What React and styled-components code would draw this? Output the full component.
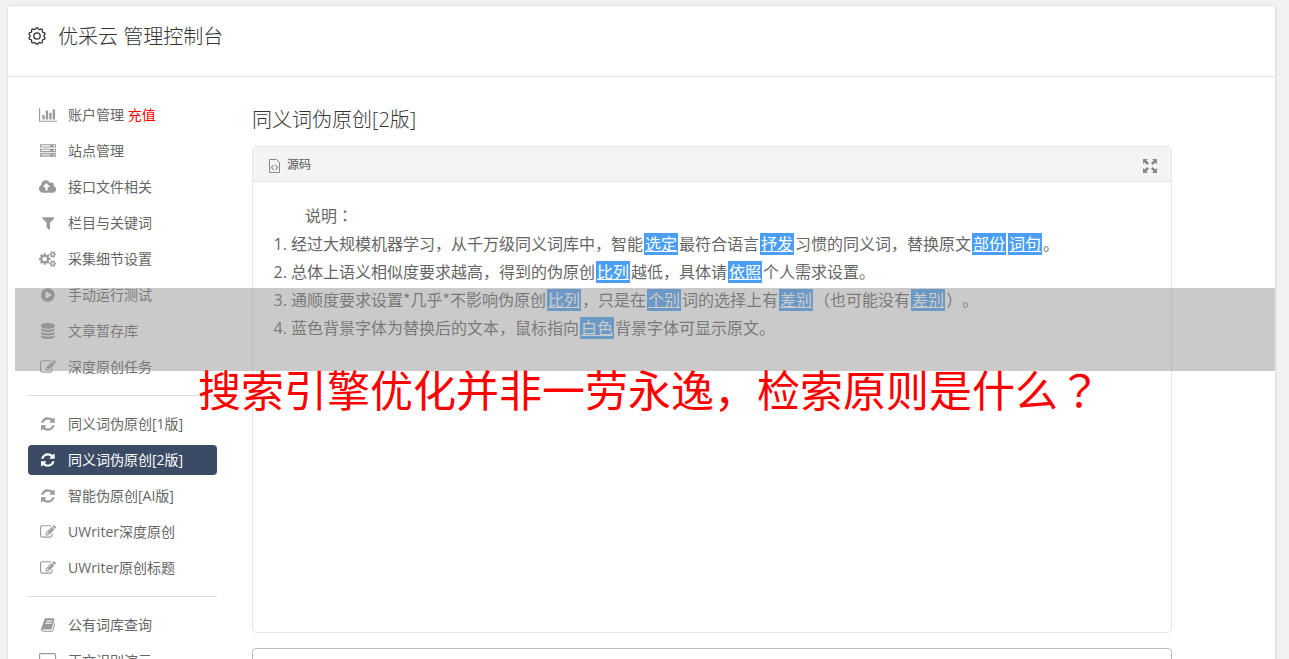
import React from 'react';
import styled, { createGlobalStyle } from 'styled-components';

const GlobalStyle = createGlobalStyle`
  *,
  *::before,
  *::after {
    box-sizing: border-box;
  }

  body {
    margin: 0;
    background-color: #f1f1f1;
    color: #666;
    font-family: 'Open Sans', 'Noto Sans CJK SC', sans-serif;
    font-size: 14px;
    text-spacing-trim: space-all;
  }
`;

const Page = styled.div`
  position: relative;
  height: 100vh;
  padding: 5px 12px 0 7px;
  overflow: hidden;
`;

const Card = styled.div`
  min-height: 100%;
  border: 1px solid #e5e5e5;
  border-right-width: 2px;
  border-radius: 4px;
  background-color: white;
`;

const Header = styled.header`
  display: flex;
  align-items: flex-start;
  gap: 10px;
  height: 71px;
  padding: 17px 20px 0;
  border-bottom: 1px solid #e5e5e5;
  color: #333;

  svg {
    margin-top: 3px;
  }
`;

const Title = styled.h1`
  margin: 0;
  font-size: 20px;
  font-weight: 300;
  line-height: 28px;
`;

const Columns = styled.div`
  display: flex;
  align-items: flex-start;
  gap: 35px;
  padding: 23px 103px 0 20px;
`;

const Sidebar = styled.nav`
  flex: 0 0 189px;
`;

const Menu = styled.ul`
  display: flex;
  flex-direction: column;
  gap: 6px;
  margin: 0;
  padding: 0;
  list-style: none;

  & + & {
    margin-top: 13px;
    padding-top: 13px;
    border-top: 1px solid #ddd;
  }
`;

const MenuLink = styled.a`
  display: flex;
  align-items: center;
  gap: 10px;
  height: 30px;
  padding: 0 10px;
  border-radius: 4px;
  background-color: ${props => (props.$active ? '#3b4b66' : 'transparent')};
  color: ${props => (props.$active ? 'white' : '#666')};
  text-decoration: none;
  white-space: nowrap;

  svg {
    color: ${props => (props.$active ? 'white' : '#999')};
  }

  em {
    color: red;
    font-style: normal;
  }
`;

const MenuText = styled.span`
  padding-bottom: 2px;
`;

const IconBox = styled.span`
  display: flex;
  flex: 0 0 20px;
  justify-content: center;

  svg {
    flex: none;
  }
`;

const Content = styled.main`
  flex: 1;
  min-width: 0;
  padding-top: 6px;
`;

const SectionTitle = styled.h2`
  margin: 0 0 12px;
  color: #333;
  font-size: 20px;
  font-weight: 300;
  line-height: 28px;
`;

const Editor = styled.section`
  border: 1px solid #e5e5e5;
  border-radius: 4px;
`;

const Toolbar = styled.div`
  display: flex;
  align-items: center;
  justify-content: space-between;
  height: 35px;
  padding: 0 14px;
  border-bottom: 1px solid #e5e5e5;
  border-radius: 3px 3px 0 0;
  background-color: #f4f4f4;
`;

const ToolButton = styled.button`
  display: flex;
  align-items: center;
  gap: 6px;
  padding: 0;
  border: 0;
  background: none;
  color: #555;
  font-family: inherit;
  font-size: 12px;

  svg {
    margin-top: 4px;
    color: #888;
  }
`;

const EditorBody = styled.div`
  min-height: 450px;
  padding: 20px;
  font-size: 16px;
  line-height: 28px;

  p {
    margin: 0;
    text-indent: 2em;
  }
`;

const Notes = styled.ol`
  margin: 0;
  padding-left: 18px;
`;

const Word = styled.span`
  margin: 0 1px;
  padding: 0 1px;
  background-color: #4a9ff5;
  color: white;
  text-decoration: underline;
`;

// punctuation that sits in the middle of its cell
const Mark = styled.span`
  font-family: 'Noto Sans CJK TC', sans-serif;
  line-height: 1;
`;

const Result = styled.textarea`
  display: block;
  width: 100%;
  height: 120px;
  margin-top: 15px;
  border: 1px solid #bbb;
  border-radius: 4px;
  resize: none;
`;

const Band = styled.div`
  position: absolute;
  top: 288px;
  right: 14px;
  left: 15px;
  height: 83px;
  background-color: rgba(145, 145, 145, 0.48);
`;

const Caption = styled.div`
  position: absolute;
  top: 361px;
  right: 0;
  left: 10px;
  color: red;
  font-size: 43px;
  line-height: 60px;
  text-align: center;
  white-space: nowrap;
`;

const smallCog =
  'v140q0 16-149 31-12 27-30 52 51 113 51 138 0 4-4 7-122 71-124 71-8 0-46-47t-52-68q-20 2-30 2t-30-2q-14 21-52 68t-46 47q-2 0-124-71-4-3-4-7 0-25 51-138-18-25-30-52-149-15-149-31v-140q0-16 149-31 13-29 30-52-51-113-51-138 0-4 4-7 4-2 35-20t59-34 30-16q8 0 46 46.5t52 67.5q20-2 30-2t30 2q51-71 92-112l6-2q4 0 124 70 4 3 4 7 0 25-51 138 17 23 30 52 149 15 149 31z';

const dot = 'q0-40-28-68t-68-28-68 28-28 68 28 68 68 28 68-28 28-68z';

const disk =
  'q237 0 443-43t325-127v170q0 69-103 128t-280 93.5-385 34.5-385-34.5-280-93.5-103-128v-170q119 84 325 127t443 43z';

// [width of the 1792-high glyph, outline]
const glyphs = {
  chart: [
    2048,
    'M640 896v512h-256v-512h256zM1024 384v1024h-256v-1024h256zM2048 1536v128h-2048v-1536h128v1408h1920zM1408 640v768h-256v-768h256zM1792 256v1152h-256v-1152h256z',
  ],
  server: [
    1792,
    `M128 1408h1024v-128h-1024v128zM128 896h1024v-128h-1024v128zM1696 1344${dot}M128 384h1024v-128h-1024v128zM1696 832${dot}M1696 320${dot}M1792 1152v384h-1792v-384h1792zM1792 640v384h-1792v-384h1792zM1792 128v384h-1792v-384h1792z`,
  ],
  cloud: [
    1920,
    'M1216 864q0-14-9-23l-352-352q-9-9-23-9t-23 9l-351 351q-10 12-10 24 0 14 9 23t23 9h224v352q0 13 9.5 22.5t22.5 9.5h192q13 0 22.5-9.5t9.5-22.5v-352h224q13 0 22.5-9.5t9.5-22.5zM1920 1152q0 159-112.5 271.5t-271.5 112.5h-1088q-185 0-316.5-131.5t-131.5-316.5q0-130 70-240t188-165q-2-30-2-43 0-212 150-362t362-150q156 0 285.5 87t188.5 231q71-62 166-62 106 0 181 75t75 181q0 76-41 138 130 31 213.5 135.5t83.5 238.5z',
  ],
  filter: [
    1408,
    'M1403 295q17 41-14 70l-493 493v742q0 42-39 59-13 5-25 5-27 0-45-19l-256-256q-19-19-19-45v-486l-493-493q-31-29-14-70 17-39 59-39h1280q42 0 59 39z',
  ],
  cogs: [
    1920,
    `M896 896q0-106-75-181t-181-75-181 75-75 181 75 181 181 75 181-75 75-181zM1664 1408q0-52-38-90t-90-38-90 38-38 90q0 53 37.5 90.5t90.5 37.5 90.5-37.5 37.5-90.5zM1664 384q0-52-38-90t-90-38-90 38-38 90q0 53 37.5 90.5t90.5 37.5 90.5-37.5 37.5-90.5zM1280 805v185q0 10-7 19.5t-16 10.5l-155 24q-11 35-32 76 34 48 90 115 7 11 7 20 0 12-7 19-23 30-82.5 89.5t-78.5 59.5q-11 0-21-7l-115-90q-37 19-77 31-11 108-23 155-7 24-30 24h-186q-11 0-20-7.5t-10-17.5l-23-153q-34-10-75-31l-118 89q-7 7-20 7-11 0-21-8-144-133-144-160 0-9 7-19 10-14 41-53t47-61q-23-44-35-82l-152-24q-10-1-17-9.5t-7-19.5v-185q0-10 7-19.5t16-10.5l155-24q11-35 32-76-34-48-90-115-7-11-7-20 0-12 7-20 22-30 82-89t79-59q11 0 21 7l115 90q34-18 77-32 11-108 23-154 7-24 30-24h186q11 0 20 7.5t10 17.5l23 153q34 10 75 31l118-89q8-7 20-7 11 0 21 8 144 133 144 160 0 8-7 19-12 16-42 54t-45 60q23 48 34 82l152 23q10 2 17 10.5t7 19.5zM1920 1338${smallCog}M1920 314${smallCog}`,
  ],
  play: [
    1536,
    'M1184 896q0-37-32-55l-544-320q-31-19-64-1-32 19-32 56v640q0 37 32 56 16 8 32 8 17 0 32-9l544-320q32-18 32-55zM1536 896q0 209-103 385.5t-279.5 279.5-385.5 103-385.5-103-279.5-279.5-103-385.5 103-385.5 279.5-279.5 385.5-103 385.5 103 279.5 279.5 103 385.5z',
  ],
  database: [
    1536,
    `M768 768${disk}M768 1536${disk}M768 1152${disk}M768 0q208 0 385 34.5t280 93.5 103 128v128q0 69-103 128t-280 93.5-385 34.5-385-34.5-280-93.5-103-128v-128q0-69 103-128t280-93.5 385-34.5z`,
  ],
  edit: [
    1792,
    'M888 1184l116-116-152-152-116 116v56h96v96h56zM1328 464q-16-16-33 1l-350 350q-17 17-1 33t33-1l350-350q17-17 1-33zM1408 1058v190q0 119-84.5 203.5t-203.5 84.5h-832q-119 0-203.5-84.5t-84.5-203.5v-832q0-119 84.5-203.5t203.5-84.5h832q63 0 117 25 15 7 18 23 3 17-9 29l-49 49q-14 14-32 8-23-6-45-6h-832q-66 0-113 47t-47 113v832q0 66 47 113t113 47h832q66 0 113-47t47-113v-126q0-13 9-22l64-64q15-15 35-7t20 29zM1312 320l288 288-672 672h-288v-288zM1756 452l-92 92-288-288 92-92q28-28 68-28t68 28l152 152q28 28 28 68t-28 68z',
  ],
  refresh: [
    1536,
    'M1511 1056q0 5-1 7-64 268-268 434.5t-478 166.5q-146 0-282.5-55t-243.5-157l-129 129q-19 19-45 19t-45-19-19-45v-448q0-26 19-45t45-19h448q26 0 45 19t19 45-19 45l-137 137q71 66 161 102t187 36q134 0 250-65t186-179q11-17 53-117 8-23 30-23h192q13 0 22.5 9.5t9.5 22.5zM1536 256v448q0 26-19 45t-45 19h-448q-26 0-45-19t-19-45 19-45l138-138q-148-137-349-137-134 0-250 65t-186 179q-11 17-53 117-8 23-30 23h-199q-13 0-22.5-9.5t-9.5-22.5v-7q65-268 270-434.5t480-166.5q146 0 284 55.5t245 156.5l130-129q19-19 45-19t45 19 19 45z',
  ],
  book: [
    1664,
    'M1639 478q40 57 18 129l-275 906q-19 64-76.5 107.5t-122.5 43.5h-923q-77 0-148.5-53.5t-99.5-131.5q-24-67-2-127 0-4 3-27t4-37q1-8-3-21.5t-3-19.5q2-11 8-21t16.5-23.5 16.5-23.5q23-38 45-91.5t30-91.5q3-10 .5-30t-.5-28q3-11 17-28t17-23q21-36 42-92t25-90q1-9-2.5-32t.5-28q4-13 22-30.5t22-22.5q19-26 42.5-84.5t27.5-96.5q1-8-3-25.5t-2-26.5q2-8 9-18t18-23 17-21q8-12 16.5-30.5t15-35 16-36 19.5-32 26.5-23.5 36-11.5 47.5 5.5l-1 3q38-9 51-9h761q74 0 114 56t18 130l-274 906q-36 119-71.5 153.5t-128.5 34.5h-869q-27 0-38 15-11 16-1 43 24 70 144 70h923q29 0 56-15.5t35-41.5l300-987q7-22 5-57 38 15 59 43zM575 480q-4 13 2 22.5t20 9.5h608q13 0 25.5-9.5t16.5-22.5l21-64q4-13-2-22.5t-20-9.5h-608q-13 0-25.5 9.5t-16.5 22.5zM492 736q-4 13 2 22.5t20 9.5h608q13 0 25.5-9.5t16.5-22.5l21-64q4-13-2-22.5t-20-9.5h-608q-13 0-25.5 9.5t-16.5 22.5z',
  ],
  desktop: [
    1920,
    'M1792 992v-832q0-13-9.5-22.5t-22.5-9.5h-1600q-13 0-22.5 9.5t-9.5 22.5v832q0 13 9.5 22.5t22.5 9.5h1600q13 0 22.5-9.5t9.5-22.5zM1920 160v1088q0 66-47 113t-113 47h-544q0 37 16 77.5t32 71 16 43.5q0 26-19 45t-45 19h-512q-26 0-45-19t-19-45q0-14 16-44t32-70 16-78h-544q-66 0-113-47t-47-113v-1088q0-66 47-113t113-47h1600q66 0 113 47t47 113z',
  ],
};

function Glyph({ name }) {
  const [width, d] = glyphs[name];
  return (
    <svg
      width={(width * 16) / 1792}
      height="16"
      viewBox={`0 0 ${width} 1792`}
      fill="currentColor"
      aria-hidden="true"
    >
      <path fillRule="evenodd" d={d} />
    </svg>
  );
}

// rim of the header gear: ten rounded teeth
const rim = Array.from({ length: 80 }, (_, i) => {
  const a = (i / 80) * Math.PI * 2;
  const r = 7.6 + 0.7 * Math.tanh(2 * Math.cos(a * 10));
  return `${(9 + r * Math.sin(a)).toFixed(2)},${(9 - r * Math.cos(a)).toFixed(2)}`;
}).join(' ');

const GearIcon = () => (
  <svg width="20" height="20" viewBox="0 -1 20 20" fill="none" stroke="currentColor" strokeWidth="1.3" aria-hidden="true">
    <polygon points={rim} strokeLinejoin="round" />
    <circle cx="9" cy="9" r="3.2" />
  </svg>
);

const SourceIcon = () => (
  <svg width="14" height="16" viewBox="0 0 14 16" fill="none" stroke="currentColor" aria-hidden="true">
    <path d="M2.500 1.500h7l3 3v10h-10z" />
    <path d="M6.500 7l-2 2.500 2 2.500M8.500 7l2 2.500-2 2.500" strokeWidth="1.2" />
  </svg>
);

const ExpandIcon = () => (
  <svg width="14" height="14" viewBox="0 0 14 14" fill="currentColor" aria-hidden="true">
    <path d="M0 0h5L3.400 1.600 6 4.200 4.200 6 1.600 3.400 0 5zM14 0v5l-1.600-1.600L9.800 6 8 4.200l2.600-2.600L9 0zM0 14V9l1.600 1.600L4.200 8 6 9.800l-2.600 2.600L5 14zM14 14H9l1.600-1.600L8 9.800 9.800 8l2.600 2.600L14 9z" />
  </svg>
);

const menus = [
  [
    { icon: 'chart', label: '账户管理', extra: '充值' },
    { icon: 'server', label: '站点管理' },
    { icon: 'cloud', label: '接口文件相关' },
    { icon: 'filter', label: '栏目与关键词' },
    { icon: 'cogs', label: '采集细节设置' },
    { icon: 'play', label: '手动运行测试' },
    { icon: 'database', label: '文章暂存库' },
    { icon: 'edit', label: '深度原创任务' },
  ],
  [
    { icon: 'refresh', label: '同义词伪原创[1版]' },
    { icon: 'refresh', label: '同义词伪原创[2版]', active: true },
    { icon: 'refresh', label: '智能伪原创[AI版]' },
    { icon: 'edit', label: 'UWriter深度原创' },
    { icon: 'edit', label: 'UWriter原创标题' },
  ],
  [
    { icon: 'book', label: '公有词库查询' },
    { icon: 'desktop', label: '正文识别演示' },
  ],
];

export default () => (
  <Page>
    <GlobalStyle />
    <Card>
      <Header>
        <GearIcon />
        <Title>优采云 管理控制台</Title>
      </Header>
      <Columns>
        <Sidebar>
          {menus.map(items => (
            <Menu key={items[0].label}>
              {items.map(({ icon, label, extra, active }) => (
                <li key={label}>
                  <MenuLink href="#" $active={active}>
                    <IconBox>
                      <Glyph name={icon} />
                    </IconBox>
                    <MenuText>
                      {label} {extra && <em>{extra}</em>}
                    </MenuText>
                  </MenuLink>
                </li>
              ))}
            </Menu>
          ))}
        </Sidebar>
        <Content>
          <SectionTitle>同义词伪原创[2版]</SectionTitle>
          <Editor>
            <Toolbar>
              <ToolButton type="button">
                <SourceIcon />
                源码
              </ToolButton>
              <ToolButton type="button" aria-label="全屏">
                <ExpandIcon />
              </ToolButton>
            </Toolbar>
            <EditorBody>
              <p>说明<Mark>：</Mark></p>
              <Notes>
                <li>
                  经过大规模机器学习，从千万级同义词库中，智能<Word>选定</Word>最符合语言<Word>抒发</Word>习惯的同义词，替换原文<Word>部份</Word><Word>词句</Word>。
                </li>
                <li>
                  总体上语义相似度要求越高，得到的伪原创<Word>比列</Word>越低，具体请<Word>依照</Word>个人需求设置。
                </li>
                <li>
                  通顺度要求设置<Mark>*</Mark>几乎<Mark>*</Mark>不影响伪原创<Word>比列</Word>，只是在<Word>个别</Word>词的选择上有<Word>差别</Word>（也可能没有<Word>差别</Word>）。
                </li>
                <li>
                  蓝色背景字体为替换后的文本，鼠标指向<Word>白色</Word>背景字体可显示原文。
                </li>
              </Notes>
            </EditorBody>
          </Editor>
          <Result aria-label="结果" />
        </Content>
      </Columns>
    </Card>
    <Band />
    <Caption>
      搜索引擎优化并非一劳永逸，检索原则是什么<Mark>？</Mark>
    </Caption>
  </Page>
);
